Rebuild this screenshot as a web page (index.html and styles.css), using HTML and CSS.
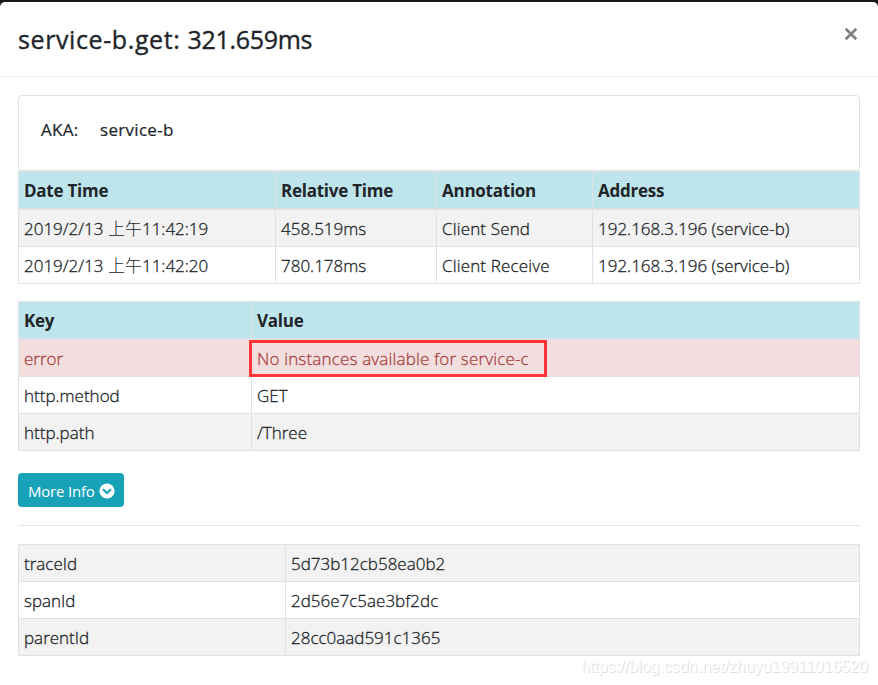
FILE: index.html
```html
<!DOCTYPE html>
<html lang="en">
<head>
<meta charset="utf-8">
<title>service-b.get</title>
<link rel="stylesheet" href="styles.css">
</head>
<body>
<div class="modal">
  <header class="modal-header">
    <h1 class="modal-title">service-b.get: <span class="duration">321.659ms</span></h1>
    <button class="close" aria-label="Close"><svg width="14" height="14" viewBox="0 0 14 14"><path d="M1.7 1.7 12.3 12.3M12.3 1.7 1.7 12.3"/></svg></button>
  </header>
  <main class="modal-body">
    <section class="card"><span class="aka">AKA:</span><span class="aka-name">service-b</span></section>
    <table class="annotations">
      <colgroup><col class="c-date"><col class="c-rel"><col class="c-ann"><col></colgroup>
      <thead><tr><th>Date Time</th><th>Relative Time</th><th>Annotation</th><th>Address</th></tr></thead>
      <tbody>
        <tr class="odd"><td>2019/2/13 <span class="cjk">上午</span>11:42:19</td><td>458.519ms</td><td class="ann">Client Send</td><td>192.168.3.196 (service-b)</td></tr>
        <tr><td>2019/2/13 <span class="cjk">上午</span>11:42:20</td><td>780.178ms</td><td class="ann">Client Receive</td><td>192.168.3.196 (service-b)</td></tr>
      </tbody>
    </table>
    <table class="tags">
      <colgroup><col class="c-key"><col></colgroup>
      <thead><tr><th>Key</th><th>Value</th></tr></thead>
      <tbody>
        <tr class="error"><td>error</td><td class="marked">No instances available for service-c</td></tr>
        <tr><td>http.method</td><td>GET</td></tr>
        <tr class="odd"><td>http.path</td><td>/Three</td></tr>
      </tbody>
    </table>
    <button class="more">More Info <svg width="16" height="16" viewBox="0 0 16 16"><circle cx="8" cy="8" r="7.6"/><path d="M4 6.3 8 10.1 12 6.3"/></svg></button>
    <hr>
    <table class="ids">
      <colgroup><col class="c-id"><col></colgroup>
      <tbody>
        <tr class="odd"><td>traceId</td><td>5d73b12cb58ea0b2</td></tr>
        <tr><td>spanId</td><td>2d56e7c5ae3bf2dc</td></tr>
        <tr class="odd"><td>parentId</td><td>28cc0aad591c1365</td></tr>
      </tbody>
    </table>
  </main>
  <div class="watermark">https://blog.csdn.net/zhuyu19911016520</div>
</div>
</body>
</html>
```
FILE: styles.css
```css
*, *::after { box-sizing: border-box; }
body {
  margin: 0;
  padding-top: 2px;
  height: 685px;
  overflow: hidden;
  background: #17191d;
  color: #212529;
  font: 400 17px/24px "Open Sans", "Noto Sans", "Noto Sans CJK SC", sans-serif;
}
.modal {
  position: relative;
  height: 683px;
  background: #fff;
  border-radius: 5px 5px 0 0;
}
.modal-header {
  display: flex;
  justify-content: space-between;
  height: 75px;
  padding: 18px;
  border-bottom: 1px solid #e9ecef;
}
.modal-title {
  margin: 0;
  font-size: 25px;
  line-height: 39px;
  font-weight: 400;
  letter-spacing: 0.6px;
  -webkit-text-stroke: 0.35px #212529;
}
.duration { letter-spacing: -0.3px; }
button { font-family: inherit; border: 0; }
.close {
  width: 14px;
  height: 14px;
  margin: 7px 2px 0 0;
  padding: 0;
  background: none;
}
.close svg { display: block; }
.close path { fill: none; stroke: #808080; stroke-width: 2.7; }
.modal-body { padding: 18px 18px 0; }
.card {
  display: flex;
  height: 76px;
  padding: 22px;
  border: 1px solid #dfdfdf;
  border-radius: 4px;
  letter-spacing: 0.3px;
  -webkit-text-stroke: 0.2px #212529;
}
.aka { width: 59px; }
table {
  width: 842px;
  table-layout: fixed;
  border-collapse: separate;
  border-spacing: 0;
  border: solid #dee2e6;
  border-width: 1px 0 0 1px;
}
th, td {
  height: 37px;
  padding: 2px 5px 0;
  text-align: left;
  white-space: nowrap;
  border: solid #dee2e6;
  border-width: 0 1px 1px 0;
}
td {
  font-weight: 300;
  -webkit-text-stroke: 0.3px currentColor;
}
.ann { letter-spacing: 0.15px; }
.cjk { -webkit-text-stroke: 0; }
th {
  height: 38px;
  background: #bee5eb;
  font-weight: 700;
  letter-spacing: -0.25px;
  border-bottom-width: 2px;
}
.odd { background: #f2f2f2; }
.error { background: #f2dede; color: #a94442; }
.error td { border-right-color: #ecdcdf; }
.c-date { width: 257px; }
.c-rel { width: 161px; }
.c-ann { width: 156px; }
.c-key { width: 233px; }
.c-id { width: 267px; }
.tags { margin-top: 17px; }
.marked { position: relative; letter-spacing: 0.17px; }
.marked::after {
  content: "";
  position: absolute;
  left: -3px;
  top: 0;
  width: 298px;
  height: 37px;
  border: 3px solid #fc3636;
}
.more {
  display: flex;
  align-items: center;
  gap: 4px;
  width: 106px;
  height: 34px;
  margin-top: 22px;
  padding: 2px 0 0 10px;
  border-radius: 4px;
  background: #17a2b8;
  color: #fff;
  font-size: 15px;
  letter-spacing: -0.2px;
  white-space: nowrap;
}
.more circle { fill: #fff; }
.more path { fill: none; stroke: #17a2b8; stroke-width: 2.2; }
hr {
  height: 1px;
  margin: 18px 0;
  border: 0;
  background: #e5e5e5;
}
.watermark {
  position: absolute;
  right: 10px;
  bottom: 8px;
  color: #fff;
  font: 16px/20px "Liberation Sans", sans-serif;
  text-shadow: 1px 1px 0 #dedede;
}
```
